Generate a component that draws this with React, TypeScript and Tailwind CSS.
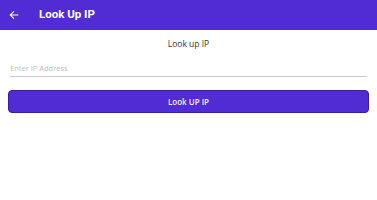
export default function App() {
  return (
    <div className="h-[200px] w-[377px] bg-white font-['Open_Sans',sans-serif]">
      {/* Header */}
      <div className="flex h-[30px] items-center bg-[#512bd4] pl-[9px]">
        <svg width="10" height="10" viewBox="0 0 24 24" fill="none" stroke="white" strokeWidth="2.6" strokeLinecap="square">
          <path d="M21 12H4M11 4l-8 8 8 8" />
        </svg>
        <span className="ml-[20px] font-['Roboto',sans-serif] text-[11.5px] font-bold text-white">Look Up IP</span>
      </div>

      <div className="flex flex-col px-[8px]">
        <p className="mt-[8px] text-center text-[8.5px] leading-[12px] text-[#333]">Look up IP</p>

        <div className="mx-[2px] mt-[13px] border-b border-[#c8c8c8] pb-[2px]">
          <input
            placeholder="Enter IP Address"
            className="block h-[11px] w-full text-[7.5px] leading-[11px] text-[#333] outline-none placeholder:text-[#bdbdbd]"
          />
        </div>

        <button
          type="button"
          className="mt-[13px] h-[23px] w-full rounded-[4px] border border-[#3a1c9e] bg-[#512bd4] text-[8px] font-semibold text-[#f4f0ff]"
        >
          Look UP IP
        </button>
      </div>
    </div>
  );
}
